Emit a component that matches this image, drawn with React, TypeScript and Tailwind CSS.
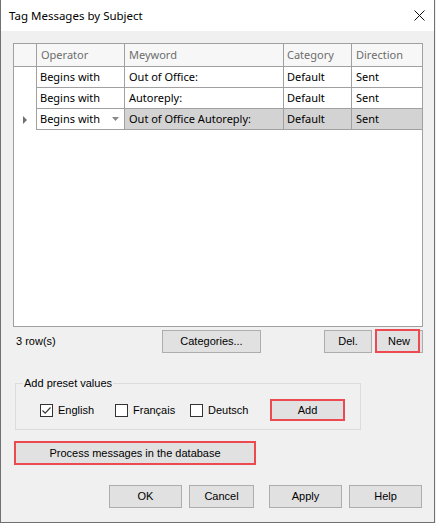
const grid = "font-['Noto_Sans','Segoe_UI',sans-serif] text-[11px]";
const win = "font-['Liberation_Sans',Arial,sans-serif] text-[11px]";

const rows = [
  { op: "Begins with", kw: "Out of Office:", cat: "Default", dir: "Sent" },
  { op: "Begins with", kw: "Autoreply:", cat: "Default", dir: "Sent" },
  { op: "Begins with", kw: "Out of Office Autoreply:", cat: "Default", dir: "Sent", current: true },
];

function Button({
  label,
  className,
  red,
}: {
  label: string;
  className: string;
  red?: boolean;
}) {
  return (
    <button
      className={`flex items-center justify-center bg-[#e1e1e1] text-black ${
        red ? "border-2 border-[#ec4a50]" : "border border-[#adadad]"
      } ${className}`}
    >
      {label}
    </button>
  );
}

function Check({ checked }: { checked?: boolean }) {
  return (
    <span className="flex h-[13px] w-[13px] shrink-0 items-center justify-center border border-[#333] bg-white">
      {checked && (
        <svg width="11" height="11" viewBox="0 0 11 11">
          <path d="M1.5 5.5 L4.2 8.2 L9.5 2.5" fill="none" stroke="#3a3a3a" strokeWidth="1.2" />
        </svg>
      )}
    </span>
  );
}

export default function App() {
  return (
    <div className={`h-[523px] w-[436px] bg-[#f0f0f0] ${win}`}>
      <div className="flex h-[523px] w-[435px] flex-col border-x border-b border-[#707070] bg-[#f0f0f0]">
        {/* title bar */}
        <div className="flex h-[31px] shrink-0 items-center justify-between bg-white pl-[8px] pr-[9px]">
          <span className="font-['Noto_Sans','Segoe_UI',sans-serif] text-[11.5px] text-black">
            Tag Messages by Subject
          </span>
          <svg width="11" height="11" viewBox="0 0 11 11">
            <path d="M0.5 0.5 L10.5 10.5 M10.5 0.5 L0.5 10.5" stroke="#111" strokeWidth="1" />
          </svg>
        </div>

        <div className="flex flex-col pl-[12px]">
          {/* data grid */}
          <div className={`mt-[12px] h-[284px] w-[410px] border border-[#a0a0a0] bg-white ${grid}`}>
            <div className="flex h-[23px] border-b border-[#a0a0a0] bg-[#f7f7f7] text-[#6d6d6d]">
              <div className="w-[23px] border-r border-[#a0a0a0]" />
              <div className="flex w-[88px] items-center border-r border-[#a0a0a0] pl-[4px]">Operator</div>
              <div className="flex w-[159px] items-center border-r border-[#a0a0a0] pl-[4px]">Meyword</div>
              <div className="flex w-[68px] items-center border-r border-[#a0a0a0] pl-[3px]">Category</div>
              <div className="flex w-[70px] items-center pl-[4px]">Direction</div>
            </div>
            {rows.map((r, i) => (
              <div key={i} className="flex h-[21px] text-black">
                <div className="flex w-[23px] items-center justify-center border-r border-[#a0a0a0]">
                  {r.current && (
                    <svg width="4" height="8" viewBox="0 0 4 8">
                      <path d="M0 0 L4 4 L0 8 Z" fill="#707070" />
                    </svg>
                  )}
                </div>
                <div className="flex w-[88px] items-center justify-between border-r border-b border-[#a0a0a0] bg-white pl-[3px] pr-[5px]">
                  <span>{r.op}</span>
                  {r.current && (
                    <svg width="7" height="4" viewBox="0 0 7 4">
                      <path d="M0 0 L7 0 L3.5 4 Z" fill="#8a8a8a" />
                    </svg>
                  )}
                </div>
                <div className={`flex w-[159px] items-center border-r border-b border-[#a0a0a0] pl-[4px] ${r.current ? "bg-[#d3d3d3]" : ""}`}>
                  {r.kw}
                </div>
                <div className={`flex w-[68px] items-center border-r border-b border-[#a0a0a0] pl-[3px] ${r.current ? "bg-[#d3d3d3]" : ""}`}>
                  {r.cat}
                </div>
                <div className={`flex w-[70px] items-center border-b border-[#a0a0a0] pl-[4px] ${r.current ? "bg-[#d3d3d3]" : ""}`}>
                  {r.dir}
                </div>
              </div>
            ))}
          </div>

          {/* grid footer */}
          <div className="mt-[3px] flex h-[23px] items-center">
            <span className="ml-[3px] w-[146px] text-black">3 row(s)</span>
            <Button label="Categories..." className="h-[23px] w-[99px]" />
            <Button label="Del." className="ml-[63px] h-[23px] w-[48px]" />
            <div className="relative ml-[3px] h-[23px] w-[48px]">
              <Button label="New" className="h-[23px] w-[48px]" />
              <span className="absolute left-0 top-[-1px] h-[24px] w-[45px] border-2 border-[#ec4a50]" />
            </div>
          </div>

          {/* preset group */}
          <div className="relative ml-[2px] mt-[30px] h-[47px] w-[346px] border border-[#dcdcdc]">
            <span className="absolute left-[7px] top-[-8px] bg-[#f0f0f0] px-[1px] leading-[14px] text-black">
              Add preset values
            </span>
            <div className="mt-[15px] flex h-[22px] items-center pl-[24px]">
              <label className="flex w-[75px] items-center gap-[5px]">
                <Check checked />
                <span>English</span>
              </label>
              <label className="flex w-[75px] items-center gap-[5px]">
                <Check />
                <span>Français</span>
              </label>
              <label className="flex w-[80px] items-center gap-[5px]">
                <Check />
                <span>Deutsch</span>
              </label>
              <Button label="Add" red className="h-[22px] w-[75px]" />
            </div>
          </div>

          <Button
            label="Process messages in the database"
            red
            className="ml-[1px] mt-[11px] h-[24px] w-[242px]"
          />

          <div className="mt-[20px] flex h-[23px] pl-[96px]">
            <Button label="OK" className="h-[23px] w-[73px]" />
            <Button label="Cancel" className="ml-[7px] h-[23px] w-[65px]" />
            <Button label="Apply" className="ml-[15px] h-[23px] w-[73px]" />
            <Button label="Help" className="ml-[7px] h-[23px] w-[73px]" />
          </div>
        </div>
      </div>
    </div>
  );
}
